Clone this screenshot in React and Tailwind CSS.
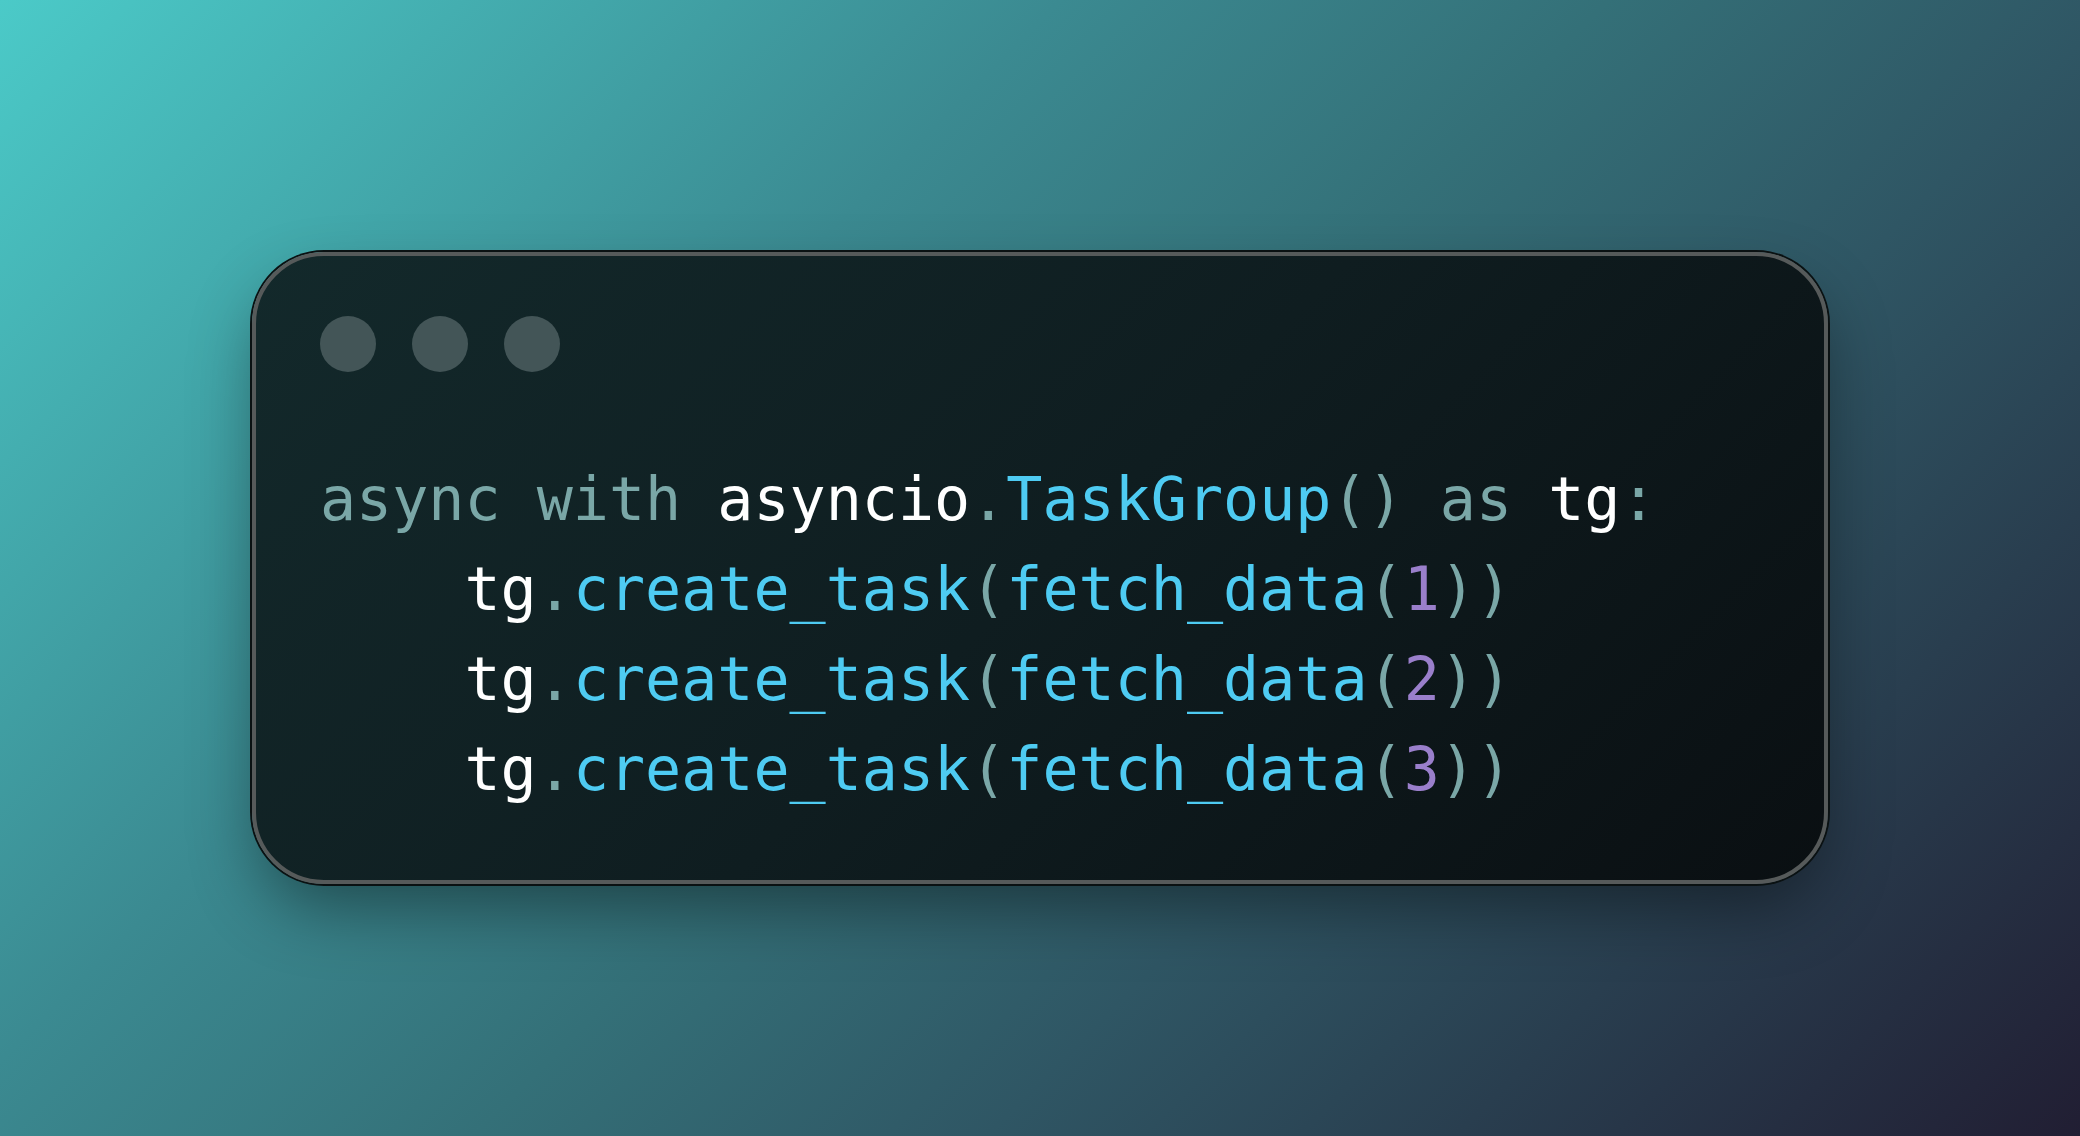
export default function App() {
  const kw = 'text-[#7aa7a7]'
  const id = 'text-white'
  const fn = 'text-[#4ecbf2]'
  const num = 'text-[#9a7fcb]'

  const taskLine = (n) => (
    <div>
      <span>{'    '}</span>
      <span className={id}>tg</span>
      <span className={kw}>.</span>
      <span className={fn}>create_task</span>
      <span className={kw}>(</span>
      <span className={fn}>fetch_data</span>
      <span className={kw}>(</span>
      <span className={num}>{n}</span>
      <span className={kw}>))</span>
    </div>
  )

  return (
    <div className="min-h-screen w-full flex items-center justify-center bg-[linear-gradient(135deg,#4bcac8_0%,#3b8a91_33%,#347078_50%,#2f5664_66%,#211e33_100%)]">
      <div className="w-[1576px] h-[632px] rounded-[72px] border-4 border-[#565a5a] bg-[linear-gradient(135deg,#13292b_0%,#0f1d20_50%,#0a0f12_100%)] shadow-[0_0_0_2px_#0a1112,0_30px_70px_-10px_rgba(0,0,0,0.45)] pl-16 pt-[60px]">
        {/* window dots */}
        <div className="flex gap-9">
          <div className="w-14 h-14 rounded-full bg-[#435557]" />
          <div className="w-14 h-14 rounded-full bg-[#435557]" />
          <div className="w-14 h-14 rounded-full bg-[#435557]" />
        </div>

        {/* code */}
        <pre className="mt-[82px] text-[60px] leading-[90px] font-['DejaVu_Sans_Mono',monospace]">
          <div>
            <span className={kw}>async with </span>
            <span className={id}>asyncio</span>
            <span className={kw}>.</span>
            <span className={fn}>TaskGroup</span>
            <span className={kw}>() as </span>
            <span className={id}>tg</span>
            <span className={kw}>:</span>
          </div>
          {taskLine(1)}
          {taskLine(2)}
          {taskLine(3)}
        </pre>
      </div>
    </div>
  )
}
